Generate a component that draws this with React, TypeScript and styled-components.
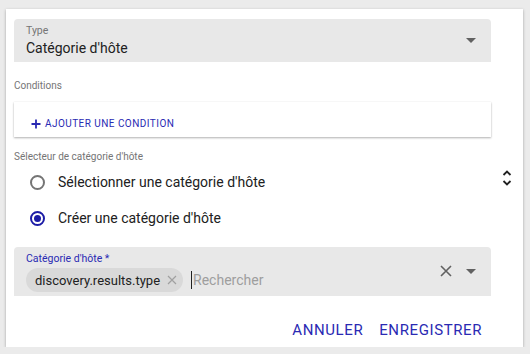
import React from "react";
import styled, { createGlobalStyle } from "styled-components";

const Global = createGlobalStyle`
  html, body { margin: 0; padding: 0; background: #ebebeb; }
  body { font-family: Roboto, "Liberation Sans", Arial, sans-serif; color: #212121; }
  * { box-sizing: border-box; }
`;

const Card = styled.div`
  margin: 9px 0 0 6px;
  width: 517px;
  height: 338px;
  background: #fff;
  box-shadow: 0 1px 3px rgba(0,0,0,0.25), 0 1px 1px rgba(0,0,0,0.12);
  padding: 10px 32px 0 8px;
  display: flex;
  flex-direction: column;
`;

const FilledField = styled.div<{ $h: number }>`
  height: ${(p) => p.$h}px;
  background: #e8e8e8;
  border-radius: 4px 4px 0 0;
  padding: 0 12px;
  display: flex;
  align-items: center;
  position: relative;
`;

const FieldBody = styled.div`
  flex: 1;
  display: flex;
  flex-direction: column;
`;

const FieldLabel = styled.div<{ $active?: boolean }>`
  font-size: 10.5px;
  line-height: 12px;
  color: ${(p) => (p.$active ? "#2a2ab3" : "#757575")};
`;

const FieldValue = styled.div`
  font-size: 14px;
  line-height: 18px;
  color: #212121;
  margin-top: 2px;
`;

const Caret = styled.div`
  width: 0;
  height: 0;
  border-left: 5px solid transparent;
  border-right: 5px solid transparent;
  border-top: 5px solid #616161;
  margin-left: 14px;
  margin-right: 3px;
`;

const SectionLabel = styled.div<{ $mt: number }>`
  font-size: 10px;
  line-height: 12px;
  color: #757575;
  margin-top: ${(p) => p.$mt}px;
`;

const ConditionsBox = styled.div`
  margin-top: 10px;
  height: 35px;
  background: #fff;
  box-shadow: 0 1px 2px rgba(0,0,0,0.3), 0 0 1px rgba(0,0,0,0.08);
  padding: 16px 0 0 17px;
`;

const AddButton = styled.button`
  border: 0;
  background: none;
  padding: 0;
  display: flex;
  align-items: center;
  gap: 4px;
  font-family: Roboto, "Liberation Sans", Arial, sans-serif;
  font-size: 10px;
  letter-spacing: 0.45px;
  color: #2a2ab3;
  text-transform: uppercase;
  cursor: pointer;
`;

const RadioSection = styled.div`
  display: flex;
  align-items: flex-start;
  margin-top: 1px;
`;

const RadioGroup = styled.div`
  flex: 1;
  display: flex;
  flex-direction: column;
  padding-left: 16px;
`;

const RadioRow = styled.label`
  height: 36px;
  display: flex;
  align-items: center;
  gap: 13px;
  font-size: 14px;
  color: #212121;
`;

const RadioCircle = styled.span<{ $checked?: boolean }>`
  width: 15px;
  height: 15px;
  border-radius: 50%;
  border: 2px solid ${(p) => (p.$checked ? "#1c1ca6" : "#757575")};
  display: flex;
  align-items: center;
  justify-content: center;
  &::after {
    content: "";
    width: 7px;
    height: 7px;
    border-radius: 50%;
    background: ${(p) => (p.$checked ? "#1c1ca6" : "transparent")};
  }
`;

const SortIcon = styled.div`
  margin-right: -22px;
  margin-top: 5px;
  width: 12px;
  display: flex;
  justify-content: center;
`;

const ChipField = styled(FilledField)`
  margin-top: 11px;
  align-items: stretch;
  padding-top: 6px;
`;

const ChipRow = styled.div`
  display: flex;
  align-items: center;
  margin-top: 3px;
`;

const Chip = styled.div`
  height: 24px;
  border-radius: 12px;
  background: #d9d9d9;
  display: flex;
  align-items: center;
  padding: 0 6px 0 9px;
  gap: 7px;
  font-size: 13px;
  color: #212121;
`;

const SearchInput = styled.div`
  margin-left: 8px;
  border-left: 1px solid #212121;
  padding-left: 1px;
  height: 18px;
  line-height: 18px;
  font-size: 14px;
  color: #9e9e9e;
`;

const FieldActions = styled.div`
  display: flex;
  align-items: center;
  align-self: flex-start;
  margin-top: 12px;
`;

const Footer = styled.div`
  display: flex;
  justify-content: flex-end;
  gap: 16px;
  margin-top: 25px;
  padding-right: 9px;
`;

const TextButton = styled.button`
  border: 0;
  background: none;
  padding: 0;
  font-family: Roboto, "Liberation Sans", Arial, sans-serif;
  font-size: 15px;
  letter-spacing: 0.6px;
  color: #2a2ab3;
  text-transform: uppercase;
  cursor: pointer;
`;

export default function App() {
  return (
    <>
      <Global />
      <Card>
        <FilledField $h={43}>
          <FieldBody>
            <FieldLabel>Type</FieldLabel>
            <FieldValue>Catégorie d'hôte</FieldValue>
          </FieldBody>
          <Caret />
        </FilledField>

        <SectionLabel $mt={18}>Conditions</SectionLabel>
        <ConditionsBox>
          <AddButton>
            <svg width="10" height="10" viewBox="0 0 10 10">
              <path d="M5 0.5v9M0.5 5h9" stroke="#2a2ab3" strokeWidth="1.8" />
            </svg>
            Ajouter une condition
          </AddButton>
        </ConditionsBox>

        <SectionLabel $mt={14}>Sélecteur de catégorie d'hôte</SectionLabel>
        <RadioSection>
          <RadioGroup>
            <RadioRow>
              <RadioCircle />
              Sélectionner une catégorie d'hôte
            </RadioRow>
            <RadioRow>
              <RadioCircle $checked />
              Créer une catégorie d'hôte
            </RadioRow>
          </RadioGroup>
          <SortIcon>
            <svg width="10" height="18" viewBox="0 0 10 18">
              <path d="M1.5 6l3.5-3.5 3.5 3.5M1.5 12l3.5 3.5 3.5-3.5" stroke="#212121" strokeWidth="1.8" fill="none" />
            </svg>
          </SortIcon>
        </RadioSection>

        <ChipField $h={49}>
          <FieldBody>
            <FieldLabel $active>Catégorie d'hôte *</FieldLabel>
            <ChipRow>
              <Chip>
                discovery.results.type
                <svg width="10" height="10" viewBox="0 0 10 10">
                  <path d="M1 1l8 8M9 1l-8 8" stroke="#a0a0a0" strokeWidth="1.2" />
                </svg>
              </Chip>
              <SearchInput>Rechercher</SearchInput>
            </ChipRow>
          </FieldBody>
          <FieldActions>
            <svg width="12" height="12" viewBox="0 0 12 12">
              <path d="M1 1l10 10M11 1l-10 10" stroke="#616161" strokeWidth="1.6" />
            </svg>
            <Caret />
          </FieldActions>
        </ChipField>

        <Footer>
          <TextButton>Annuler</TextButton>
          <TextButton>Enregistrer</TextButton>
        </Footer>
      </Card>
    </>
  );
}
